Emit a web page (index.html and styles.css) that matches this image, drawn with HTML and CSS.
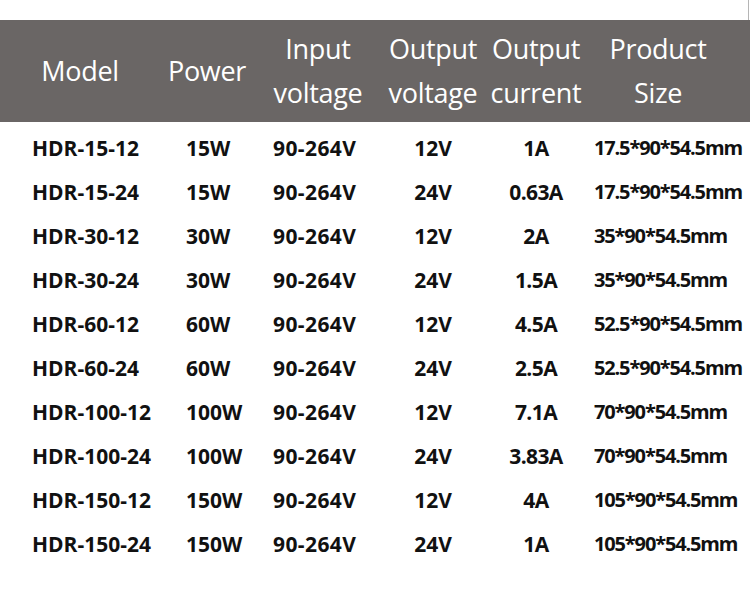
FILE: index.html
```html
<!DOCTYPE html>
<html>
<head>
<meta charset="utf-8">
<link rel="stylesheet" href="styles.css">
</head>
<body>
<div class="page">
  <div class="top"></div>
  <div class="grid head">
    <div class="h c1">Model</div>
    <div class="h c2">Power</div>
    <div class="h c3">Input<br>voltage</div>
    <div class="h c4">Output<br>voltage</div>
    <div class="h c5">Output<br>current</div>
    <div class="h c6">Product<br>Size</div>
  </div>
  <div class="body">
    <div class="grid row"><div class="c1">HDR-15-12</div><div class="c2">15W</div><div class="c3">90-264V</div><div class="c4">12V</div><div class="c5">1A</div><div class="c6">17.5*90*54.5mm</div></div>
    <div class="grid row"><div class="c1">HDR-15-24</div><div class="c2">15W</div><div class="c3">90-264V</div><div class="c4">24V</div><div class="c5">0.63A</div><div class="c6">17.5*90*54.5mm</div></div>
    <div class="grid row"><div class="c1">HDR-30-12</div><div class="c2">30W</div><div class="c3">90-264V</div><div class="c4">12V</div><div class="c5">2A</div><div class="c6">35*90*54.5mm</div></div>
    <div class="grid row"><div class="c1">HDR-30-24</div><div class="c2">30W</div><div class="c3">90-264V</div><div class="c4">24V</div><div class="c5">1.5A</div><div class="c6">35*90*54.5mm</div></div>
    <div class="grid row"><div class="c1">HDR-60-12</div><div class="c2">60W</div><div class="c3">90-264V</div><div class="c4">12V</div><div class="c5">4.5A</div><div class="c6">52.5*90*54.5mm</div></div>
    <div class="grid row"><div class="c1">HDR-60-24</div><div class="c2">60W</div><div class="c3">90-264V</div><div class="c4">24V</div><div class="c5">2.5A</div><div class="c6">52.5*90*54.5mm</div></div>
    <div class="grid row"><div class="c1">HDR-100-12</div><div class="c2">100W</div><div class="c3">90-264V</div><div class="c4">12V</div><div class="c5">7.1A</div><div class="c6">70*90*54.5mm</div></div>
    <div class="grid row"><div class="c1">HDR-100-24</div><div class="c2">100W</div><div class="c3">90-264V</div><div class="c4">24V</div><div class="c5">3.83A</div><div class="c6">70*90*54.5mm</div></div>
    <div class="grid row"><div class="c1">HDR-150-12</div><div class="c2">150W</div><div class="c3">90-264V</div><div class="c4">12V</div><div class="c5">4A</div><div class="c6">105*90*54.5mm</div></div>
    <div class="grid row"><div class="c1">HDR-150-24</div><div class="c2">150W</div><div class="c3">90-264V</div><div class="c4">24V</div><div class="c5">1A</div><div class="c6">105*90*54.5mm</div></div>
  </div>
</div>
</body>
</html>
```
FILE: styles.css
```css
html, body {
  margin: 0;
  padding: 0;
  background: #ffffff;
}
.page {
  width: 750px;
  height: 601px;
  overflow: hidden;
  font-family: "Open Sans", "DejaVu Sans", sans-serif;
}
.top {
  height: 20px;
  width: 748px;
  border-right: 1px solid #b5b5b5;
}
.grid {
  display: grid;
  grid-template-columns: 160px 94px 128px 102px 104px 162px;
}
.head {
  background: #6a6665;
  height: 102px;
  align-items: center;
  color: #ffffff;
  font-size: 27px;
  line-height: 44px;
  text-align: center;
  letter-spacing: -0.3px;
}
.head .c6 {
  padding-right: 22px;
}
.body {
  padding-top: 4px;
}
.row {
  height: 44px;
  line-height: 44px;
  font-size: 21px;
  font-weight: 700;
  color: #111111;
  white-space: nowrap;
}
.row .c1 { padding-left: 32px; }
.row .c2 { padding-left: 26px; }
.row .c3 { padding-left: 19px; letter-spacing: 0.4px; }
.row .c4 { text-align: center; }
.row .c5 { text-align: center; letter-spacing: -0.6px; }
.row .c6 {
  padding-left: 6px;
  font-size: 20px;
  letter-spacing: -1.15px;
}
```
